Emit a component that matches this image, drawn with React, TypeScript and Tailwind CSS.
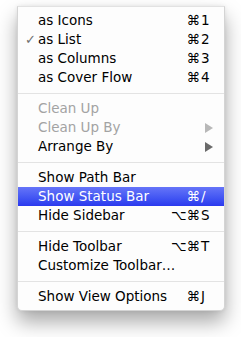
import React from 'react';

type Item =
  | { sep: true }
  | {
      sep?: false;
      label: string;
      mods?: string;
      keyChar?: string;
      checked?: boolean;
      disabled?: boolean;
      submenu?: boolean;
      active?: boolean;
    };

const items: Item[] = [
  { label: 'as Icons', mods: '⌘', keyChar: '1' },
  { label: 'as List', mods: '⌘', keyChar: '2', checked: true },
  { label: 'as Columns', mods: '⌘', keyChar: '3' },
  { label: 'as Cover Flow', mods: '⌘', keyChar: '4' },
  { sep: true },
  { label: 'Clean Up', disabled: true },
  { label: 'Clean Up By', disabled: true, submenu: true },
  { label: 'Arrange By', submenu: true },
  { sep: true },
  { label: 'Show Path Bar' },
  { label: 'Show Status Bar', mods: '⌘', keyChar: '/', active: true },
  { label: 'Hide Sidebar', mods: '⌥⌘', keyChar: 'S' },
  { sep: true },
  { label: 'Hide Toolbar', mods: '⌥⌘', keyChar: 'T' },
  { label: 'Customize Toolbar…' },
  { sep: true },
  { label: 'Show View Options', mods: '⌘', keyChar: 'J' },
];

export default function App() {
  return (
    <div
      className="w-[241px] h-[337px] bg-white pt-[6px] pl-[17px]"
      style={{ fontFamily: '"DejaVu Sans", "Liberation Sans", sans-serif' }}
    >
      <div className="w-[208px] flex flex-col py-[4px] bg-[#fdfdfd] border border-[#d4d4d4] border-t-[#e2e2e2] rounded-b-[5px] shadow-[0_11px_20px_rgba(0,0,0,0.34),0_0_4px_rgba(0,0,0,0.08)] text-[13.5px] leading-none">
        {items.map((item, i) => {
          if (item.sep) {
            return (
              <div key={i} className="h-[12px] flex items-center">
                <div className="w-full h-px bg-[#e3e3e3]" />
              </div>
            );
          }
          const color = item.active
            ? 'text-white'
            : item.disabled
            ? 'text-[#a3a3a3]'
            : 'text-black';
          return (
            <div
              key={i}
              className={`h-[19px] flex items-center ${color} ${
                item.active ? 'bg-gradient-to-b from-[#6674f8] to-[#2b38ee]' : ''
              }`}
            >
              <div className="w-[20px] pl-[7px] text-[#707070] text-[13px]">
                {item.checked ? '✓' : ''}
              </div>
              <div className="flex-1 whitespace-nowrap">{item.label}</div>
              {item.mods && (
                <div className="flex items-center">
                  <span className="text-right">{item.mods}</span>
                  <span className="w-[12px] pl-[1px] text-left">{item.keyChar}</span>
                </div>
              )}
              {item.submenu && (
                <svg width="8" height="10" viewBox="0 0 8 10" className="mr-[11px]">
                  <path
                    d="M0 0 L8 5 L0 10 Z"
                    fill={item.disabled ? '#b8b8b8' : '#6a6a6a'}
                  />
                </svg>
              )}
              <div className={item.mods ? 'w-[12px]' : 'w-0'} />
            </div>
          );
        })}
      </div>
    </div>
  );
}
